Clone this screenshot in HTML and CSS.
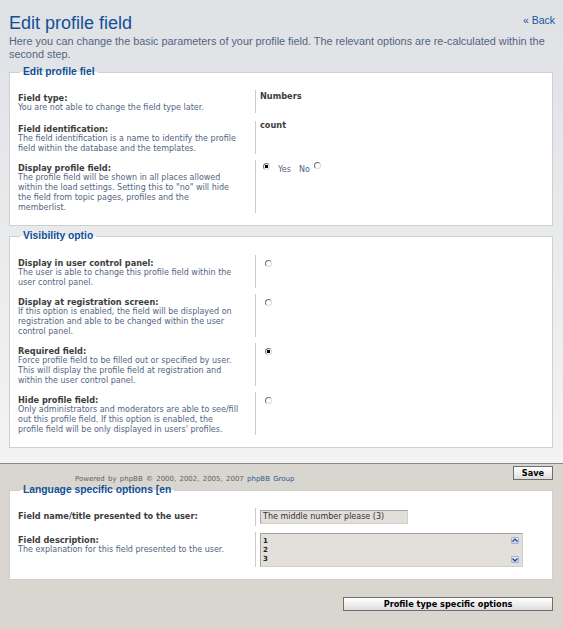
FILE: index.html
```html
<!DOCTYPE html>
<html lang="en">
<head>
<meta charset="utf-8">
<title>Edit profile field</title>
<link rel="stylesheet" href="styles.css">
</head>
<body>
<div class="page-top">
  <div class="heading">
    <h1 class="title">Edit profile field</h1>
    <a class="back" href="#">« Back</a>
  </div>
  <p class="intro">Here you can change the basic parameters of your profile field. The relevant options are re-calculated within the second step.</p>

  <fieldset class="panel panel-first">
    <legend class="panel-legend">Edit profile fiel</legend>
    <dl class="row row-first">
      <dt class="row-label"><b class="label">Field type:</b><span class="explain">You are not able to change the field type later.</span></dt>
      <dd class="row-value"><b class="value">Numbers</b></dd>
    </dl>
    <dl class="row">
      <dt class="row-label"><b class="label">Field identification:</b><span class="explain">The field identification is a name to identify the profile<br>field within the database and the templates.</span></dt>
      <dd class="row-value"><b class="value value-up">count</b></dd>
    </dl>
    <dl class="row">
      <dt class="row-label"><b class="label">Display profile field:</b><span class="explain">The profile field will be shown in all places allowed<br>within the load settings. Setting this to "no" will hide<br>the field from topic pages, profiles and the<br>memberlist.</span></dt>
      <dd class="row-value">
        <div class="choice">
          <span class="radio radio-on radio-yes"></span>
          <span class="choice-text choice-yes">Yes</span>
          <span class="choice-text choice-no">No</span>
          <span class="radio radio-no"></span>
        </div>
      </dd>
    </dl>
  </fieldset>

  <fieldset class="panel panel-second">
    <legend class="panel-legend">Visibility optio</legend>
    <dl class="row">
      <dt class="row-label"><b class="label">Display in user control panel:</b><span class="explain">The user is able to change this profile field within the<br>user control panel.</span></dt>
      <dd class="row-value"><span class="radio radio-single"></span></dd>
    </dl>
    <dl class="row">
      <dt class="row-label"><b class="label">Display at registration screen:</b><span class="explain">If this option is enabled, the field will be displayed on<br>registration and able to be changed within the user<br>control panel.</span></dt>
      <dd class="row-value"><span class="radio radio-single"></span></dd>
    </dl>
    <dl class="row">
      <dt class="row-label"><b class="label">Required field:</b><span class="explain">Force profile field to be filled out or specified by user.<br>This will display the profile field at registration and<br>within the user control panel.</span></dt>
      <dd class="row-value"><span class="radio radio-single radio-on"></span></dd>
    </dl>
    <dl class="row">
      <dt class="row-label"><b class="label">Hide profile field:</b><span class="explain">Only administrators and moderators are able to see/fill<br>out this profile field. If this option is enabled, the<br>profile field will be only displayed in users' profiles.</span></dt>
      <dd class="row-value"><span class="radio radio-single"></span></dd>
    </dl>
  </fieldset>
</div>

<div class="page-bottom">
  <div class="footbar">
    <span class="powered">Powered by phpBB &copy; 2000, 2002, 2005, 2007 <span class="powered-link">phpBB Group</span></span>
    <button class="btn btn-save" type="button">Save</button>
  </div>

  <fieldset class="panel panel-third">
    <legend class="panel-legend">Language specific options [en</legend>
    <dl class="row">
      <dt class="row-label"><b class="label">Field name/title presented to the user:</b></dt>
      <dd class="row-value"><div class="fake-input">The middle number please (3)</div></dd>
    </dl>
    <dl class="row">
      <dt class="row-label"><b class="label">Field description:</b><span class="explain">The explanation for this field presented to the user.</span></dt>
      <dd class="row-value">
        <div class="fake-textarea">
          <div class="ta-lines"><span>1</span><span>2</span><span>3</span></div>
          <div class="ta-scroll">
            <span class="ta-btn"><svg width="6" height="5" viewBox="0 0 6 5"><polyline points="0.5,3.5 3,1 5.5,3.5" fill="none" stroke="#2b3f6b" stroke-width="1.2"/></svg></span>
            <span class="ta-btn"><svg width="6" height="5" viewBox="0 0 6 5"><polyline points="0.5,1.5 3,4 5.5,1.5" fill="none" stroke="#2b3f6b" stroke-width="1.2"/></svg></span>
          </div>
        </div>
      </dd>
    </dl>
  </fieldset>

  <div class="actions">
    <button class="btn btn-wide" type="button">Profile type specific options</button>
  </div>
</div>
</body>
</html>
```

FILE: styles.css
```css
* { box-sizing: border-box; }

html, body {
  margin: 0;
  padding: 0;
}

body {
  background: #d9d6d0;
  min-height: 100vh;
  font-family: "DejaVu Sans", Verdana, sans-serif;
  color: #3d3d3d;
}

.page-top {
  background: linear-gradient(to bottom, #dfe1e5 0%, #f3f3f3 100%);
  padding: 12px 10px 15px 9px;
  border-bottom: 1px solid #8a8a8a;
}

.heading {
  display: flex;
  justify-content: space-between;
  align-items: flex-start;
}

.title {
  margin: 0;
  font: normal 18px/22px "Liberation Sans", Arial, sans-serif;
  color: #115098;
}

.back {
  margin: 2px -2px 0 0;
  font: 10.5px/13px "Liberation Sans", Arial, sans-serif;
  color: #1a56a0;
  text-decoration: none;
}

.intro {
  margin: 1px 0 5px;
  font: 10.85px/13px "Liberation Sans", Arial, sans-serif;
  color: #536482;
}

.panel {
  margin: 0;
  padding: 9px 8px 9px 8px;
  border: 1px solid #cfcfcf;
  background: #fff;
  min-width: 0;
}

.panel-second {
  margin-top: 4px;
  padding-top: 10px;
}

.panel-third {
  margin-top: 1px;
}

.panel-legend {
  margin-left: 2px;
  padding: 0 3px 0 3px;
  font: bold 10.3px/12px "Liberation Sans", Arial, sans-serif;
  color: #115098;
  white-space: nowrap;
}

.row {
  display: flex;
  margin: 0;
  padding: 3px 0;
}

.row-first { padding-bottom: 5px; }

.row-label {
  flex: none;
  width: 238px;
  margin: 0;
  padding: 3px 0 0;
  border-right: 1px solid #cccccc;
}

.label {
  display: block;
  font: bold 8.2px/10px "DejaVu Sans", Verdana, sans-serif;
  color: #3d3d3d;
  white-space: nowrap;
}

.explain {
  display: block;
  font: 8px/10px "DejaVu Sans", Verdana, sans-serif;
  color: #536482;
  white-space: nowrap;
}

.row-value {
  margin: 0;
  padding: 1px 0 0 4px;
}

.value {
  display: block;
  font: bold 8.2px/10px "DejaVu Sans", Verdana, sans-serif;
  color: #3d3d3d;
}

.value-up { margin-top: -2px; }

.radio {
  display: block;
  flex: none;
  width: 7px;
  height: 7px;
  border-radius: 50%;
  border: 1px solid;
  border-color: #6f6f6f #dadada #dadada #6f6f6f;
  background: #fff;
}

.radio-on {
  background: radial-gradient(circle, #000 0, #000 1.5px, #fff 2px);
}

.radio-single {
  margin: 4px 0 0 5px;
}

.choice {
  display: flex;
  align-items: flex-start;
}

.radio-yes { margin: 2px 0 0 3px; }
.radio-no { margin: 1px 0 0 4px; }

.choice-text {
  font: 8px/10px "DejaVu Sans", Verdana, sans-serif;
  color: #536482;
  margin-top: 4px;
}

.choice-yes { margin-left: 8px; }
.choice-no { margin-left: 8px; }

.page-bottom {
  padding: 0 10px 0 9px;
}

.footbar {
  display: flex;
  justify-content: space-between;
  align-items: flex-start;
  padding: 2px 0 0 66px;
}

.powered {
  margin-top: 9px;
  font: 7px/8px "DejaVu Sans", Verdana, sans-serif;
  color: #5f5f5f;
  word-spacing: 1px;
}

.powered-link { color: #2c5a8f; }

.btn {
  display: block;
  margin: 0;
  padding: 0;
  height: 14px;
  border: 1px solid #6d6d6d;
  border-radius: 0;
  background: linear-gradient(to bottom, #ffffff 0%, #ececec 60%, #dcdcdc 100%);
  font: bold 8.2px/12px "DejaVu Sans", Verdana, sans-serif;
  color: #000;
  text-align: center;
}

.btn-save { width: 40px; }

.fake-input {
  width: 148px;
  height: 14px;
  margin: 1px 0 2px;
  padding: 0 0 0 2px;
  background: #e2dfda;
  border: 1px solid;
  border-color: #a3a3a3 #d2cfca #d2cfca #a3a3a3;
  font: 8px/12px "DejaVu Sans", Verdana, sans-serif;
  color: #333;
  white-space: nowrap;
}

.fake-textarea {
  display: flex;
  justify-content: space-between;
  width: 263px;
  height: 34px;
  background: #e3e0db;
  border: 1px solid;
  border-color: #a3a3a3 #d2cfca #d2cfca #a3a3a3;
}

.ta-lines {
  display: flex;
  flex-direction: column;
  padding: 3px 0 0 2px;
  font: bold 7px/9px "DejaVu Sans", Verdana, sans-serif;
  color: #222;
}

.ta-scroll {
  display: flex;
  flex-direction: column;
  justify-content: space-between;
  padding: 3px 3px 3px 0;
}

.ta-btn {
  display: flex;
  align-items: center;
  justify-content: center;
  width: 8px;
  height: 7px;
  border: 1px solid #9fb4d8;
  border-radius: 1px;
  background: linear-gradient(to bottom, #e6eefa, #bccfec);
}

.actions {
  display: flex;
  justify-content: flex-end;
  padding-top: 17px;
}

.btn-wide { width: 210px; }
```
